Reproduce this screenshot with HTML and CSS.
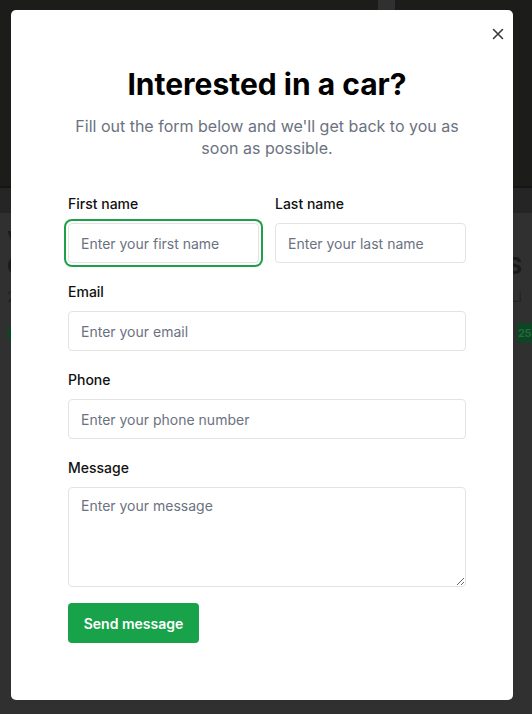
FILE: index.html
```html
<!DOCTYPE html>
<html lang="en">
<head>
<meta charset="utf-8">
<title>Interested in a car?</title>
<link rel="stylesheet" href="styles.css">
</head>
<body>
<div class="page">
  <div class="card card-left">
    <div class="card-img"></div>
    <div class="card-band"></div>
    <div class="card-body">
      <div class="card-title">Volvo<br>Cross</div>
      <div class="card-meta">2021</div>
      <div class="card-badge">New</div>
    </div>
  </div>
  <div class="card card-right">
    <div class="card-img"></div>
    <div class="card-band"></div>
    <div class="card-body">
      <div class="card-title">S</div>
      <div class="card-meta">Li</div>
      <div class="card-badge">25</div>
    </div>
  </div>
</div>

<div class="modal" role="dialog" aria-labelledby="modal-title">
  <button class="close" type="button" aria-label="Close">
    <svg width="12" height="12" viewBox="0 0 12 12" aria-hidden="true"><path d="M1.5 1.5 L10.5 10.5 M10.5 1.5 L1.5 10.5" stroke="#3a3a3a" stroke-width="1.6" stroke-linecap="round"/></svg>
  </button>
  <h2 id="modal-title" class="title">Interested in a car?</h2>
  <p class="subtitle">Fill out the form below and we'll get back to you as soon as possible.</p>
  <form class="form">
    <div class="row">
      <div class="field">
        <label class="label" for="fn">First name</label>
        <input class="input is-focused" id="fn" type="text" placeholder="Enter your first name">
      </div>
      <div class="field">
        <label class="label" for="ln">Last name</label>
        <input class="input" id="ln" type="text" placeholder="Enter your last name">
      </div>
    </div>
    <div class="field">
      <label class="label" for="em">Email</label>
      <input class="input" id="em" type="email" placeholder="Enter your email">
    </div>
    <div class="field">
      <label class="label" for="ph">Phone</label>
      <input class="input" id="ph" type="tel" placeholder="Enter your phone number">
    </div>
    <div class="field">
      <label class="label" for="msg">Message</label>
      <textarea class="input textarea" id="msg" placeholder="Enter your message"></textarea>
    </div>
    <button class="submit" type="button">Send message</button>
  </form>
</div>
</body>
</html>
```

FILE: styles.css
```css
* { box-sizing: border-box; }

html, body {
  margin: 0;
  padding: 0;
  height: 100%;
}

body {
  background: #303030;
  font-family: Inter, "Noto Sans", "Liberation Sans", sans-serif;
  overflow: hidden;
}

/* dimmed page behind the dialog */
.page {
  display: flex;
  gap: 17px;
}

.card {
  display: flex;
  flex-direction: column;
}

.card-left {
  flex: 0 0 378px;
}

.card-right {
  flex: 0 0 137px;
}

.card-img {
  height: 188px;
  background: #1c1c1a;
  border-bottom: 2px solid #151515;
}

.card-band {
  height: 25px;
  background: #252525;
}

.card-body {
  padding: 14px 7px;
}

.card-right .card-body {
  display: flex;
  flex-direction: column;
  align-items: flex-end;
  padding: 14px 10px 14px 0;
}

.card-title {
  font-size: 23px;
  line-height: 26px;
  font-weight: 700;
  color: #1a1a1a;
  white-space: nowrap;
}

.card-right .card-title {
  margin-top: 26px;
}

.card-meta {
  margin-top: 9px;
  font-size: 14px;
  color: #222;
  white-space: nowrap;
}

.card-badge {
  display: inline-block;
  margin-top: 18px;
  padding: 2px 12px;
  border-radius: 12px;
  background: #0f4424;
  color: #1d6d3a;
  font-size: 14px;
  font-weight: 700;
}

.card-right .card-badge {
  border-radius: 2px 0 0 2px;
  padding: 3px 0 3px 1px;
  margin-right: -10px;
  width: 15px;
  font-size: 11px;
  letter-spacing: -0.5px;
  white-space: nowrap;
}

/* dialog */
.modal {
  position: absolute;
  left: 11px;
  top: 10px;
  width: 502px;
  height: 690px;
  background: #fff;
  border-radius: 5px;
  padding: 56px 47px 0 57px;
}

.close {
  position: absolute;
  top: 17px;
  right: 8px;
  width: 14px;
  height: 14px;
  padding: 0;
  border: 0;
  background: transparent;
  display: flex;
  align-items: center;
  justify-content: center;
}

.title {
  margin: 0;
  font-size: 30px;
  line-height: 36px;
  font-weight: 700;
  color: #000;
  text-align: center;
  letter-spacing: 0;
}

.subtitle {
  margin: 13px 0 0;
  font-size: 16px;
  line-height: 22px;
  color: #6b7280;
  text-align: center;
}

.form {
  margin-top: 35px;
  display: flex;
  flex-direction: column;
  gap: 19px;
}

.row {
  display: grid;
  grid-template-columns: 1fr 1fr;
  gap: 16px;
}

.field {
  display: flex;
  flex-direction: column;
  gap: 9px;
}

.label {
  font-size: 14px;
  line-height: 20px;
  font-weight: 500;
  color: #111;
}

.input {
  display: block;
  width: 100%;
  height: 40px;
  padding: 0 12px;
  border: 1px solid #e3e3e3;
  border-radius: 4px;
  font-family: inherit;
  font-size: 14px;
  color: #111;
  background: #fff;
  outline: none;
}

.input::placeholder {
  color: #6b7280;
}

.input.is-focused {
  box-shadow: 0 0 0 2px #fff, 0 0 0 4px #1ea04a;
}

.textarea {
  height: 100px;
  padding: 8px 12px;
  line-height: 20px;
  resize: vertical;
}

.submit {
  align-self: flex-start;
  margin-top: -3px;
  height: 40px;
  width: 131px;
  border: 0;
  border-radius: 4px;
  background: #18a34a;
  color: #fff;
  font-family: inherit;
  font-size: 14px;
  font-weight: 600;
}
```
